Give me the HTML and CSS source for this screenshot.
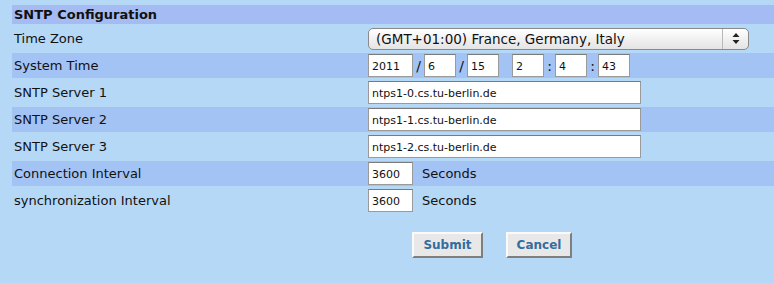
FILE: index.html
```html
<!DOCTYPE html>
<html lang="en">
<head>
  <meta charset="UTF-8">
  <title>SNTP Configuration</title>
  <link rel="stylesheet" href="styles.css">
</head>
<body>

<table class="config">
  <tr class="head">
    <td colspan="2">SNTP Configuration</td>
  </tr>
  <tr>
    <td class="label">Time Zone</td>
    <td>
      <div class="select-wrap">
        <select class="tz">
          <option>(GMT+01:00) France, Germany, Italy</option>
        </select>
        <span class="arrows">
          <svg width="8" height="11" viewBox="0 0 8 11"><path d="M4 0L7.5 4H0.5Z M4 11L7.5 7H0.5Z" fill="#222"/></svg>
        </span>
      </div>
    </td>
  </tr>
  <tr class="alt">
    <td class="label">System Time</td>
    <td>
      <div class="time">
        <input type="text" class="f-year" value="2011"><span class="sep">/</span>
        <input type="text" class="f-small" value="6"><span class="sep">/</span>
        <input type="text" class="f-small" value="15"><span class="gap"></span>
        <input type="text" class="f-small" value="2"><span class="sep">:</span>
        <input type="text" class="f-small" value="4"><span class="sep">:</span>
        <input type="text" class="f-small" value="43">
      </div>
    </td>
  </tr>
  <tr>
    <td class="label">SNTP Server 1</td>
    <td><input type="text" class="f-server" value="ntps1-0.cs.tu-berlin.de"></td>
  </tr>
  <tr class="alt">
    <td class="label">SNTP Server 2</td>
    <td><input type="text" class="f-server" value="ntps1-1.cs.tu-berlin.de"></td>
  </tr>
  <tr>
    <td class="label">SNTP Server 3</td>
    <td><input type="text" class="f-server" value="ntps1-2.cs.tu-berlin.de"></td>
  </tr>
  <tr class="alt">
    <td class="label">Connection Interval</td>
    <td><input type="text" class="f-year" value="3600"><span class="unit">Seconds</span></td>
  </tr>
  <tr>
    <td class="label">synchronization Interval</td>
    <td><input type="text" class="f-year" value="3600"><span class="unit">Seconds</span></td>
  </tr>
</table>

<div class="buttons">
  <button class="btn">Submit</button>
  <button class="btn">Cancel</button>
</div>

</body>
</html>
```

FILE: styles.css
```css
body {
  margin: 0;
  padding: 3px 0 0 12px;
  background-color: #b5d8f7;
  font-family: "DejaVu Sans", Verdana, sans-serif;
  font-size: 13px;
  color: #111;
}
.config {
  width: 100%;
  border-collapse: separate;
  border-spacing: 0 2px;
}
.config td {
  padding: 0 0 0 2px;
  height: 25px;
  vertical-align: middle;
}
.config td.label {
  width: 352px;
}
.head td {
  height: 19px;
  background-color: #a4bbf3;
  font-weight: bold;
}
.alt td {
  background-color: #a3c3f4;
}
input[type="text"] {
  box-sizing: border-box;
  height: 23px;
  margin: 0;
  padding: 1px 3px 0;
  border: 1px solid #9a9a9a;
  border-top-color: #7b7b7b;
  background: #fff;
  font-family: "DejaVu Sans", Verdana, sans-serif;
  font-size: 11px;
  color: #111;
  vertical-align: middle;
}
.f-year {
  width: 45px;
}
.f-small {
  width: 32px;
}
.f-server {
  width: 273px;
}
.time {
  display: flex;
  align-items: center;
}
.sep {
  width: 11px;
  text-align: center;
  font-size: 14px;
}
.gap {
  width: 13px;
}
.unit {
  margin-left: 9px;
  vertical-align: middle;
}
.select-wrap {
  position: relative;
  width: 381px;
  height: 22px;
}
.tz {
  appearance: none;
  -webkit-appearance: none;
  width: 100%;
  height: 22px;
  margin: 0;
  padding: 0 0 0 7px;
  border: 1px solid #8a8a8a;
  border-radius: 5px;
  background: linear-gradient(#ffffff, #f1f1f1 50%, #e4e4e4);
  font-family: "DejaVu Sans", Verdana, sans-serif;
  font-size: 13.5px;
  color: #111;
}
.arrows {
  position: absolute;
  top: 1px;
  right: 1px;
  width: 25px;
  height: 20px;
  border-left: 1px solid #b8b8b8;
  display: flex;
  align-items: center;
  justify-content: center;
  pointer-events: none;
}
.buttons {
  display: flex;
  gap: 23px;
  margin: 17px 0 0 400px;
}
.btn {
  width: 71px;
  height: 26px;
  padding: 0;
  border: 2px solid;
  border-color: #fafafa #7e7e7e #7e7e7e #fafafa;
  background-color: #e8e8e8;
  font-family: "DejaVu Sans", Verdana, sans-serif;
  font-size: 12px;
  font-weight: bold;
  color: #336d9e;
}
.btn + .btn {
  width: 66px;
}
```
